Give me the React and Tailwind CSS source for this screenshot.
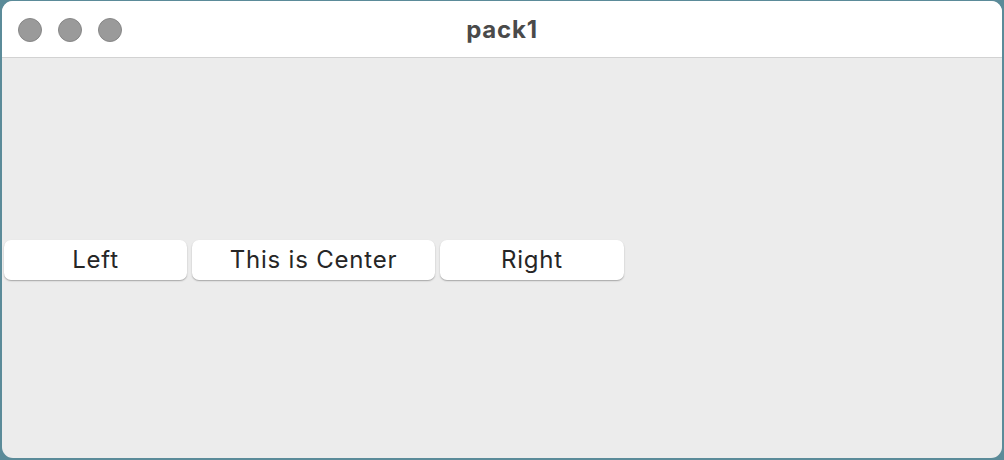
import React from "react";

const Dot = () => (
  <div className="w-[24px] h-[24px] rounded-full bg-[#9a9a9a] border border-[#878787]" />
);

const Btn = ({ label, width }) => (
  <button
    className={`${width} h-[40px] bg-white rounded-[7px] shadow-[0_1px_1.5px_rgba(0,0,0,0.3)] text-[24px] tracking-[0.8px] text-[#262626] leading-none flex items-center justify-center`}
  >
    {label}
  </button>
);

export default function App() {
  return (
    <div
      className="w-[1004px] h-[460px] bg-[#5b8b99] pt-[1px] pl-[2px] pr-[2px] pb-[2px] flex"
      style={{ fontFamily: "Inter, 'Noto Sans', sans-serif" }}
    >
      <div className="flex-1 flex flex-col rounded-[11px] overflow-hidden bg-[#ececec]">
        <div className="h-[57px] bg-white border-b border-[#d2d2d2] relative flex items-center justify-center">
          <div className="absolute left-[16px] top-[17px] flex gap-[16px]">
            <Dot />
            <Dot />
            <Dot />
          </div>
          <span className="text-[24px] tracking-[0.8px] font-bold text-[#4a4a4a] pt-[2px]">pack1</span>
        </div>
        <div className="flex-1 flex items-center pl-[2px] pt-[3px] gap-[5px]">
          <Btn label="Left" width="w-[183px]" />
          <Btn label="This is Center" width="w-[243px]" />
          <Btn label="Right" width="w-[184px]" />
        </div>
      </div>
    </div>
  );
}
